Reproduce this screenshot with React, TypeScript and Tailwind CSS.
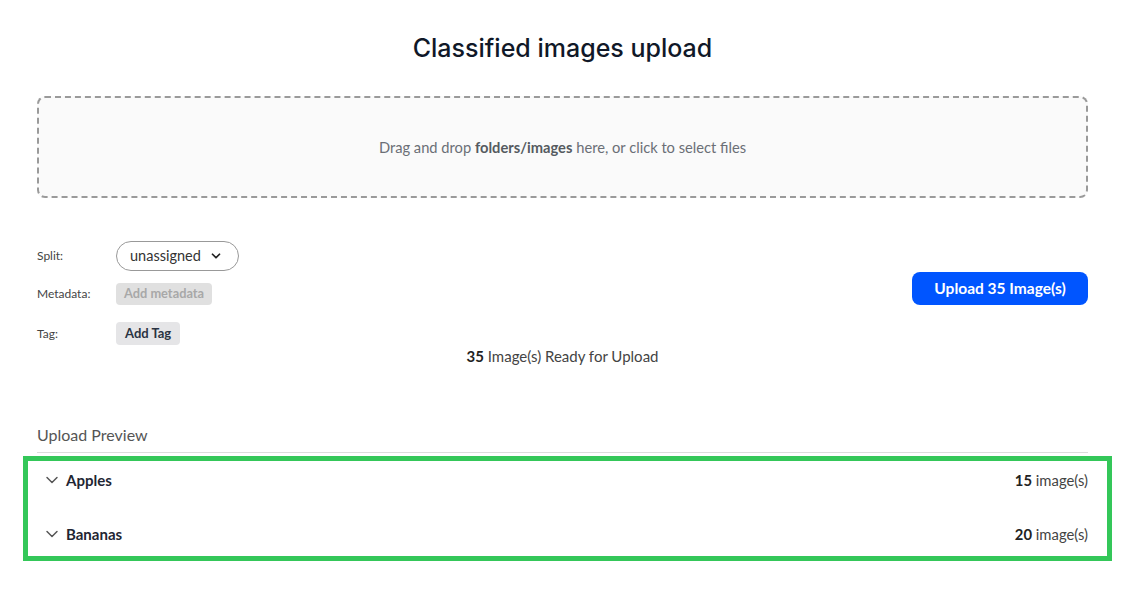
import React from 'react';
import { ChevronDown } from 'lucide-react';

const body = { fontFamily: 'Lato, "Noto Sans", sans-serif' };

function Row({ name, count }: { name: string; count: number }) {
  return (
    <div className="flex h-[38px] items-center justify-between">
      <div className="flex items-center gap-1">
        <ChevronDown size={20} strokeWidth={1.75} className="text-[#555]" />
        <span className="text-[15px] font-bold text-[#1f2633]">{name}</span>
      </div>
      <span className="text-[14.8px] text-[#444]">
        <b className="font-bold text-[#222]">{count}</b> image(s)
      </span>
    </div>
  );
}

export default function App() {
  return (
    <div className="min-h-screen bg-white px-[37px] pt-8 text-[#333]" style={body}>
      <h1
        className="h-8 text-center text-[25px] font-medium leading-8 text-[#101828]"
        style={{ fontFamily: 'Inter, "Open Sans", sans-serif' }}
      >
        Classified images upload
      </h1>

      <div className="mt-8 flex h-[102px] items-center justify-center rounded-lg border-2 border-dashed border-[#9a9a9a] bg-[#fafafa]">
        <p className="text-[14.7px] leading-5 text-[#6b6f76]">
          Drag and drop <b className="font-bold text-[#555a60]">folders/images</b> here, or click to select files
        </p>
      </div>

      <div className="mt-[43px] flex items-start justify-between">
        <div className="flex flex-col text-[12px] text-[#444]">
          <div className="flex h-[30px] items-center">
            <span className="w-[79px]">Split:</span>
            <button className="flex h-[30px] w-[123px] items-center justify-between rounded-full border border-[#999] pl-[13px] pr-[15px] text-[14.5px] text-[#333]">
              unassigned
              <ChevronDown size={14} strokeWidth={3} className="text-[#222]" />
            </button>
          </div>
          <div className="mt-3 flex h-[22px] items-center">
            <span className="w-[79px]">Metadata:</span>
            <span className="flex h-[22px] items-center rounded bg-[#e0e0e0] px-2 text-[12.8px] font-bold text-[#a8a8a8]">
              Add metadata
            </span>
          </div>
          <div className="mt-[17px] flex h-[23px] items-center">
            <span className="w-[79px]">Tag:</span>
            <span className="flex h-[23px] items-center rounded bg-[#e5e5e7] px-[9px] text-[13px] font-bold text-[#2a3342]">
              Add Tag
            </span>
          </div>
        </div>
        <button className="mt-[31px] h-[33px] w-[176px] rounded-lg bg-[#0055ff] text-[15.5px] font-bold text-white">
          Upload 35 Image(s)
        </button>
      </div>

      <p className="mt-[2px] text-center text-[15px] leading-[18px] text-[#444]">
        <b className="font-bold text-[#222]">35</b> Image(s) Ready for Upload
      </p>

      <div className="mt-[60px] border-b border-[#dcdcdc] pb-[7px] text-[16px] leading-5 text-[#555]">
        Upload Preview
      </div>

      <div className="-ml-[14px] -mr-[24px] mt-[3px] flex flex-col gap-4 border-[5px] border-[#34c759] pb-[3px] pl-[14px] pr-[19px]">
        <Row name="Apples" count={15} />
        <Row name="Bananas" count={20} />
      </div>
    </div>
  );
}
